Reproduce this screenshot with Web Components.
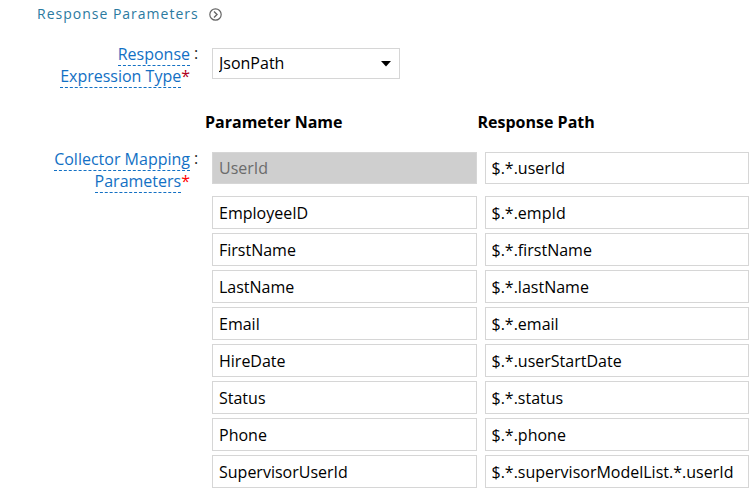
<!DOCTYPE html>
<html lang="en">
<head>
<meta charset="utf-8">
<title>Response Parameters</title>
<style>
  body { margin: 0; background: #fff; color: #000; font: 16px/22px "Open Sans", "Noto Sans", sans-serif; font-feature-settings: "locl" 0; }
</style>
</head>
<body>
<response-settings></response-settings>

<template id="section-link-template">
  <style>
    :host { display: block; padding: 4px 37px 0; font-size: 14px; line-height: 20px; }
    a { display: inline-flex; align-items: center; gap: 10px; color: #2b7a9f; text-decoration: none; letter-spacing: 1px; }
    svg { width: 13px; height: 13px; fill: none; stroke: #666; }
  </style>
  <a href="#response-parameters"><slot></slot>
    <svg viewBox="0 0 13 13" aria-hidden="true"><circle cx="6.5" cy="6.5" r="5.7" stroke-width="1.2"/><path d="M5 3.5 8 6.5 5 9.5" stroke-width="1.4"/></svg>
  </a>
</template>

<template id="form-row-template">
  <style>
    :host { display: grid; grid-template-columns: 142px 14px minmax(0, 1fr); padding: 0 4px 0 48px; }
    .label { text-align: right; padding-top: var(--label-offset, 0); }
    .colon { padding: var(--label-offset, 0) 0 0 4px; color: #222; line-height: 20px; }
  </style>
  <div class="label"><slot name="label"></slot></div>
  <div class="colon">:</div>
  <div><slot></slot></div>
</template>

<template id="mapping-table-template">
  <style>
    :host { display: block; }
    table { width: 100%; table-layout: fixed; border-collapse: collapse; }
    th { padding: 0 0 19px 1px; text-align: left; font-weight: 700; }
    td { padding: 0 0 4px 8px; }
    tr.key td { padding-bottom: 12px; }
    input { display: block; box-sizing: border-box; width: 100%; height: 33px; margin: 0; padding: 0 6px; border: 1px solid #d6d6d6; border-radius: 0; background: #fff; color: #000; font: inherit; font-feature-settings: inherit; }
    tr.key input { height: 32px; }
    input:disabled { background: #cfcfcf; color: #6b6b6b; }
  </style>
  <table>
    <thead><tr><th scope="col">Parameter Name</th><th scope="col">Response Path</th></tr></thead>
    <tbody></tbody>
  </table>
</template>

<template id="response-settings-template">
  <style>
    :host { display: block; }
    .type { margin-top: 19px; }
    .mapping { margin-top: 24px; --label-offset: 37px; }
    label, .caption { color: #1270c4; border-bottom: 1px dashed #1270c4; }
    .required { color: #f00; }
    .type .required { color: #b00020; }
    .select { display: grid; width: 188px; margin: 5px 0 0 8px; align-items: center; }
    .select > * { grid-area: 1 / 1; }
    select { appearance: none; box-sizing: border-box; width: 100%; height: 31px; margin: 0; padding: 0 28px 1px 6px; border: 1px solid #d6d6d6; border-radius: 0; background: #fff; color: #000; font: inherit; font-feature-settings: inherit; }
    svg { justify-self: end; width: 10px; height: 6px; margin-right: 9px; pointer-events: none; }
  </style>
  <section-link>Response Parameters</section-link>
  <form-row class="type">
    <span slot="label"><label for="type">Response Expression Type</label><span class="required">*</span></span>
    <div class="select">
      <select id="type"><option>JsonPath</option></select>
      <svg viewBox="0 0 10 6" aria-hidden="true"><path d="M0 0H10L5 5.5Z"/></svg>
    </div>
  </form-row>
  <form-row class="mapping">
    <span slot="label"><span class="caption">Collector Mapping Parameters</span><span class="required">*</span></span>
    <mapping-table></mapping-table>
  </form-row>
</template>

<script>
  class TemplateElement extends HTMLElement {
    constructor() {
      super();
      const template = document.getElementById(this.localName + "-template");
      this.attachShadow({ mode: "open" }).append(document.importNode(template.content, true));
    }
  }

  class MappingTable extends TemplateElement {
    constructor() {
      super();
      const rows = [
        ["UserId", "$.*.userId"], ["EmployeeID", "$.*.empId"],
        ["FirstName", "$.*.firstName"], ["LastName", "$.*.lastName"],
        ["Email", "$.*.email"], ["HireDate", "$.*.userStartDate"],
        ["Status", "$.*.status"], ["Phone", "$.*.phone"],
        ["SupervisorUserId", "$.*.supervisorModelList.*.userId"]
      ];
      const body = this.shadowRoot.querySelector("tbody");
      rows.forEach((values, index) => {
        const row = body.insertRow();
        if (index === 0) row.className = "key";
        values.forEach((value, column) => {
          const input = document.createElement("input");
          input.type = "text";
          input.value = value;
          input.disabled = index === 0 && column === 0;
          input.setAttribute("aria-label", column ? "Response path for " + values[0] : "Parameter name " + (index + 1));
          row.insertCell().append(input);
        });
      });
    }
  }

  customElements.define("section-link", class extends TemplateElement {});
  customElements.define("form-row", class extends TemplateElement {});
  customElements.define("mapping-table", MappingTable);
  customElements.define("response-settings", class extends TemplateElement {});
</script>
</body>
</html>
